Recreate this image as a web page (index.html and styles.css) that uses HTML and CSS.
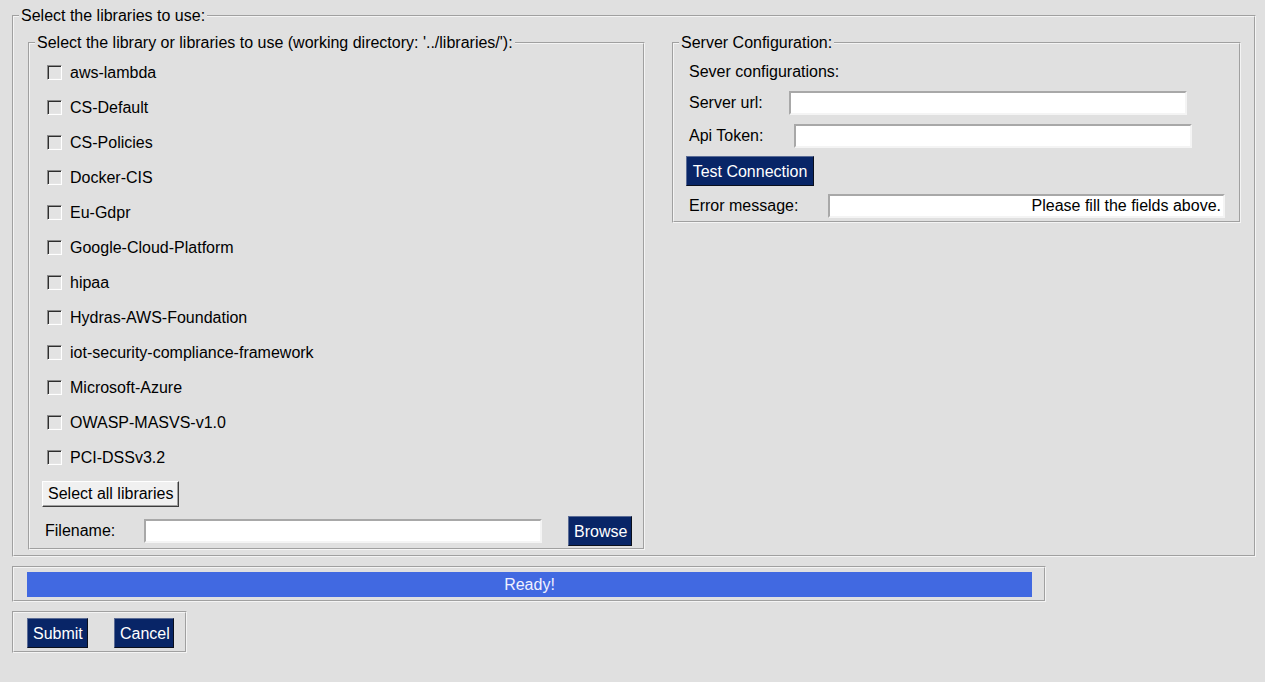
FILE: index.html
```html
<!DOCTYPE html>
<html lang="en">
<head>
<meta charset="utf-8">
<title>Select libraries</title>
<link rel="stylesheet" href="styles.css">
</head>
<body>
<fieldset class="frame main">
  <legend class="legend">Select the libraries to use:</legend>
  <div class="columns">
    <fieldset class="frame libs">
      <legend class="legend">Select the library or libraries to use (working directory: '../libraries/'):</legend>
      <div class="lib-list">
        <label class="lib"><span class="check"></span><span>aws-lambda</span></label>
        <label class="lib"><span class="check"></span><span>CS-Default</span></label>
        <label class="lib"><span class="check"></span><span>CS-Policies</span></label>
        <label class="lib"><span class="check"></span><span>Docker-CIS</span></label>
        <label class="lib"><span class="check"></span><span>Eu-Gdpr</span></label>
        <label class="lib"><span class="check"></span><span>Google-Cloud-Platform</span></label>
        <label class="lib"><span class="check"></span><span>hipaa</span></label>
        <label class="lib"><span class="check"></span><span>Hydras-AWS-Foundation</span></label>
        <label class="lib"><span class="check"></span><span>iot-security-compliance-framework</span></label>
        <label class="lib"><span class="check"></span><span>Microsoft-Azure</span></label>
        <label class="lib"><span class="check"></span><span>OWASP-MASVS-v1.0</span></label>
        <label class="lib"><span class="check"></span><span>PCI-DSSv3.2</span></label>
      </div>
      <button class="btn-light select-all" type="button">Select all libraries</button>
      <div class="file-row">
        <span class="file-label">Filename:</span>
        <input class="field file-input" type="text">
        <button class="btn-dark browse" type="button">Browse</button>
      </div>
    </fieldset>
    <fieldset class="frame server">
      <legend class="legend">Server Configuration:</legend>
      <div class="srv-title">Sever configurations:</div>
      <div class="srv-row row-url">
        <span class="srv-label lbl-url">Server url:</span>
        <input class="field srv-input" type="text">
      </div>
      <div class="srv-row row-token">
        <span class="srv-label lbl-token">Api Token:</span>
        <input class="field srv-input" type="text">
      </div>
      <button class="btn-dark test-btn" type="button">Test Connection</button>
      <div class="srv-row row-error">
        <span class="srv-label lbl-error">Error message:</span>
        <input class="field srv-input err-input" type="text" value="Please fill the fields above." readonly>
      </div>
    </fieldset>
  </div>
</fieldset>
<div class="box progress">
  <div class="bar">Ready!</div>
</div>
<div class="box actions">
  <button class="btn-dark" type="button">Submit</button>
  <button class="btn-dark" type="button">Cancel</button>
</div>
</body>
</html>
```
FILE: styles.css
```css
html, body {
  background: #e0e0e0;
}
body {
  margin: 0;
  padding: 7px 9px 0 12px;
  font-family: "Liberation Sans", Arial, sans-serif;
  font-size: 16px;
  line-height: 18px;
  color: #000;
}
button, input {
  font-family: "Liberation Sans", Arial, sans-serif;
  font-size: 16px;
  line-height: 18px;
}

.frame {
  margin: 0;
  min-width: 0;
  border: 2px groove #f4f4f4;
  box-sizing: border-box;
}
.legend {
  padding: 0 2px;
  line-height: 18px;
}

.main {
  padding: 9px 0 5px 5px;
}
.columns {
  display: flex;
  align-items: flex-start;
  gap: 27px;
  padding-left: 9px;
}

.libs {
  width: 617px;
  padding: 3px 10px 2px 5px;
}
.lib-list {
  display: flex;
  flex-direction: column;
}
.lib {
  display: flex;
  align-items: center;
  height: 35px;
  padding-left: 12px;
}
.check {
  width: 15px;
  height: 15px;
  box-sizing: border-box;
  border: 1px solid;
  border-color: #8c8c8c #ffffff #ffffff #8c8c8c;
  box-shadow: inset 1px 1px 0 #2e2e2e, inset -1px -1px 0 #e6e6e6;
  background: #e3e3e3;
  margin-right: 8px;
}

.btn-light {
  display: block;
  height: 26px;
  box-sizing: border-box;
  margin: 6px 0 0 7px;
  padding: 0 5px;
  background: #f0f0f0;
  color: #000;
  border: 1px solid;
  border-color: #ffffff #3c3c3c #3c3c3c #ffffff;
  box-shadow: inset -1px -1px 0 #a0a0a0;
}

.btn-dark {
  height: 30px;
  box-sizing: border-box;
  padding: 1px 5px 0;
  background: #082567;
  color: #ffffff;
  border: 1px solid;
  border-color: #5a6b95 #0a0f1c #0a0f1c #5a6b95;
}

.field {
  height: 24px;
  box-sizing: border-box;
  margin: 0;
  padding: 0 2px;
  background: #ffffff;
  border: 2px solid;
  border-color: #a8a8a8 #f4f4f4 #f4f4f4 #a8a8a8;
  outline: none;
}

.file-row {
  display: flex;
  align-items: center;
  height: 30px;
  margin-top: 9px;
  padding-left: 10px;
}
.file-label {
  width: 99px;
}
.file-input {
  width: 398px;
}
.browse {
  margin-left: 26px;
  width: 64px;
}

.server {
  width: 569px;
  padding: 0 0 3px 5px;
}
.srv-title {
  margin-top: 11px;
  padding-left: 10px;
}
.srv-row {
  display: flex;
  align-items: center;
  height: 24px;
  padding-left: 10px;
}
.row-url { margin-top: 10px; }
.row-token { margin-top: 9px; }
.row-error { margin-top: 8px; }
.lbl-url { width: 100px; }
.lbl-token { width: 105px; }
.lbl-error { width: 139px; }
.srv-input {
  width: 398px;
}
.err-input {
  width: 397px;
  text-align: right;
  color: #000;
}
.test-btn {
  display: block;
  margin: 8px 0 0 7px;
  width: 128px;
}

.box {
  border: 2px groove #f4f4f4;
  box-sizing: border-box;
}
.progress {
  width: 1034px;
  margin-top: 9px;
  padding: 4px 12px 3px 13px;
}
.bar {
  height: 25px;
  background: #4169e1;
  color: #f0f0ff;
  text-align: center;
  line-height: 26px;
}
.actions {
  width: 175px;
  margin-top: 9px;
  padding: 5px 0 3px 13px;
  display: flex;
  gap: 26px;
}
.actions .btn-dark {
  height: 30px;
  width: 61px;
}
.actions .btn-dark + .btn-dark {
  width: 60px;
}
```
